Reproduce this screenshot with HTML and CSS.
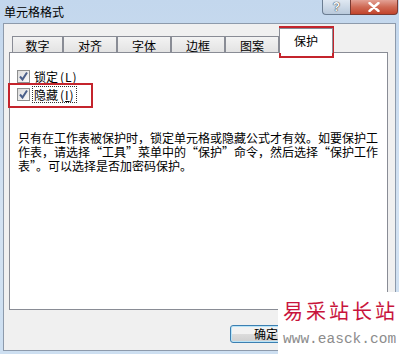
FILE: index.html
```html
<!DOCTYPE html>
<html lang="zh-CN">
<head>
    <meta charset="UTF-8">
    <title>单元格格式</title>
    <link rel="stylesheet" href="styles.css">
</head>
<body>
    <div class="window">
        <div class="titlebar">
            <span class="title">单元格格式</span>
            <div class="controls">
                <span class="ctl ctl-help">?</span>
                <span class="ctl ctl-close">
                    <svg width="12" height="10" viewBox="0 0 12 10"><path d="M1.5 1 L10.5 9 M10.5 1 L1.5 9" stroke="#fff" stroke-width="2.4" stroke-linecap="round"/></svg>
                </span>
            </div>
        </div>

        <div class="client">
            <div class="tabs">
                <div class="tab tab-first">数字</div>
                <div class="tab">对齐</div>
                <div class="tab">字体</div>
                <div class="tab">边框</div>
                <div class="tab">图案</div>
                <div class="tab tab-active">保护</div>
            </div>

            <div class="panel">
                <div class="check">
                    <span class="box"><svg width="11" height="11" viewBox="0 0 11 11"><path d="M2 5.5 L4.5 8.5 L9 1.5" fill="none" stroke="#4a5f8a" stroke-width="2"/></svg></span>
                    <span class="check-label">锁定<span class="key">(<u>L</u>)</span></span>
                </div>
                <div class="check">
                    <span class="box"><svg width="11" height="11" viewBox="0 0 11 11"><path d="M2 5.5 L4.5 8.5 L9 1.5" fill="none" stroke="#4a5f8a" stroke-width="2"/></svg></span>
                    <span class="check-label focused">隐藏<span class="key">(<u>I</u>)</span></span>
                </div>

                <p class="note">只有在工作表被保护时，锁定单元格或隐藏公式才有效。如要保护工<br>作表，请选择“工具”菜单中的“保护”命令，然后选择“保护工作<br>表”。可以选择是否加密码保护。</p>
            </div>

            <div class="footer">
                <button class="btn">确定</button>
            </div>
        </div>

        <!-- annotations drawn over the dialog -->
        <div class="mark mark-tab"></div>
        <div class="mark mark-hide"></div>

        <div class="watermark">
            <div class="wm-name">易采站长站</div>
            <div class="wm-url">www.easck.com</div>
        </div>
    </div>
</body>
</html>
```

FILE: styles.css
```css
body {
    margin: 0;
    font-family: "Noto Sans CJK SC", "Liberation Sans", sans-serif;
    font-size: 12px;
    color: #000;
    background: #fff;
}
.window {
    position: relative;
    width: 399px;
    height: 354px;
    background: linear-gradient(#c3d7ed, #d3e2f2 60%, #cddff1);
    overflow: hidden;
}
.titlebar {
    height: 23px;
    display: flex;
    justify-content: space-between;
    align-items: flex-start;
    padding-right: 1px;
    box-sizing: border-box;
}
.title {
    padding: 4px 0 0 4px;
    font-size: 12px;
    line-height: 16px;
}
.controls {
    display: flex;
}
.ctl {
    height: 15px;
    box-sizing: border-box;
    display: flex;
    align-items: center;
    justify-content: center;
    border: 1px solid #6b7d92;
    border-top: none;
}
.ctl-help {
    width: 28px;
    border-right: none;
    border-bottom-left-radius: 4px;
    background: linear-gradient(#dfe8f2, #b9c9db);
    color: #f4f7fa;
    font-family: "Liberation Sans", sans-serif;
    font-weight: bold;
    font-size: 12px;
    text-shadow: 0 0 1px #333, 0 0 1px #333;
}
.ctl-close {
    width: 48px;
    border-color: #7a3a32;
    border-bottom-right-radius: 4px;
    background: linear-gradient(#e3a195, #cf6a55 50%, #c2442c);
}
.client {
    margin-left: 3px;
    width: 393px;
    height: 328px;
    box-sizing: border-box;
    border: 1px solid #8d9aab;
    background: #f0f0f0;
}
.tabs {
    height: 28px;
    display: flex;
    align-items: flex-end;
    padding-left: 8px;
}
.tab {
    width: 54px;
    height: 16px;
    box-sizing: border-box;
    border: 1px solid #898c95;
    border-bottom: none;
    background: linear-gradient(#f3f3f3, #e3e3e3);
    text-align: center;
    line-height: 15px;
    padding-top: 1px;
}
.tab-first {
    width: 51px;
}
.tab-active {
    position: relative;
    z-index: 1;
    height: 25px;
    margin-bottom: -1px;
    background: #fff;
    padding-top: 4px;
}
.panel {
    margin-left: 5px;
    width: 379px;
    height: 258px;
    box-sizing: border-box;
    border: 1px solid #898c95;
    background: #fff;
    padding: 17px 0 0 7px;
}
.check {
    display: flex;
    align-items: center;
    height: 13px;
    margin-bottom: 5px;
}
.box {
    width: 13px;
    height: 13px;
    box-sizing: border-box;
    border: 1px solid #8e8f8f;
    background: linear-gradient(135deg, #dcdcdc, #fafafa);
    display: flex;
    align-items: center;
    justify-content: center;
}
.check-label {
    margin-left: 3px;
    line-height: 13px;
    padding: 1px 1px;
}
.key {
    margin-left: 2px;
    letter-spacing: 1px;
}
.check-label.focused {
    outline: 1px dotted #333;
    outline-offset: 0;
}
.note {
    margin: 30px 0 0 1px;
    line-height: 14px;
    white-space: nowrap;
}
.footer {
    height: 40px;
    box-sizing: border-box;
    display: flex;
    padding: 15px 0 0 226px;
}
.btn {
    width: 72px;
    height: 18px;
    padding: 0;
    font-family: inherit;
    font-size: 12px;
    line-height: 14px;
    border: 1px solid #3c7fb1;
    border-radius: 3px;
    background: linear-gradient(#f2f2f2 50%, #dcdcdc 50%, #cfcfcf);
    box-shadow: inset 0 0 0 1px #b8e4f8;
}
.mark {
    position: absolute;
    border: 2px solid #c4242c;
    box-sizing: border-box;
}
.mark-tab {
    left: 279px;
    top: 26px;
    width: 55px;
    height: 32px;
}
.mark-hide {
    left: 8px;
    top: 83px;
    width: 85px;
    height: 25px;
}
.watermark {
    position: absolute;
    left: 278px;
    top: 292px;
    width: 121px;
    height: 62px;
    background: #fff;
    padding: 6px 0 0 5px;
    box-sizing: border-box;
}
.wm-name {
    color: #c8143c;
    font-size: 20px;
    line-height: 26px;
    letter-spacing: 3px;
    white-space: nowrap;
}
.wm-url {
    margin-top: 8px;
    color: #8c8c8c;
    font-family: "Liberation Mono", monospace;
    font-size: 14.5px;
    line-height: 15px;
    white-space: nowrap;
}
```
